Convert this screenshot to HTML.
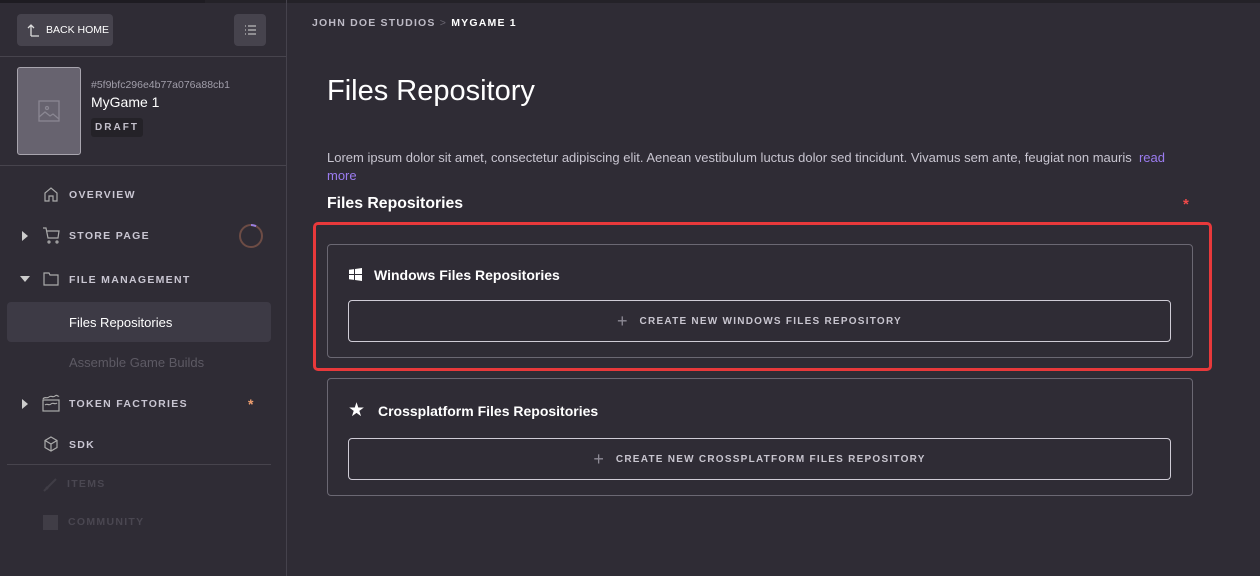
<!DOCTYPE html>
<html><head><style>
*{box-sizing:border-box;margin:0;padding:0}
body{width:1260px;height:576px;background:#2f2c35;font-family:"Liberation Sans",sans-serif;position:relative;overflow:hidden;color:#fff}
.abs{position:absolute}
.top{left:0;top:0;width:1260px;height:3px;background:#242228}
.top2{left:0;top:0;width:205px;height:3px;background:#1e1c22}
.vline{left:286px;top:0;width:1px;height:576px;background:#45424c}
.hl{height:1px;background:#47444d}
.nav{font-size:10.5px;font-weight:bold;letter-spacing:1.3px;color:#c9c6d2}
.card{border:1px solid #6b6873;border-radius:4px}
.btn{border:1px solid #cfccd6;border-radius:4px;font-size:10px;font-weight:bold;letter-spacing:1.25px;color:#c8c5cf;display:flex;align-items:center;justify-content:center}
.btn span.p{font-size:18px;font-weight:normal;color:#8d8a95;margin-right:12px;letter-spacing:0}
</style></head><body>
<div class="abs top"></div><div class="abs top2"></div>
<div class="abs vline"></div>

<div class="abs" style="left:17px;top:14px;width:96px;height:32px;background:#46434d;border-radius:4px;display:flex;align-items:center;padding-left:10px;font-size:10.5px;color:#fff">
<svg width="14" height="16" viewBox="0 0 14 16" style="margin-right:5px"><path d="M4 14V3M1 6l3-3 3 3M4 14h8" stroke="#ddd" stroke-width="1.3" fill="none"/></svg>BACK HOME</div>
<div class="abs" style="left:234px;top:14px;width:32px;height:32px;background:#46434d;border-radius:4px">
<svg width="32" height="32" viewBox="0 0 32 32"><g stroke="#bbb" stroke-width="1.3"><path d="M11 12h1M14 12h8M11 16h1M14 16h8M11 20h1M14 20h8"/></g></svg></div>
<div class="abs hl" style="left:0;top:56px;width:286px"></div>

<div class="abs" style="left:17px;top:67px;width:64px;height:88px;background:#67636f;border:1px solid #a8a5ae;border-radius:3px">
<svg class="abs" style="left:20px;top:32px" width="22" height="22" viewBox="0 0 22 22"><g stroke="#8a8792" stroke-width="1.3" fill="none"><rect x="1" y="1" width="20" height="20"/><circle cx="9" cy="8" r="1.5"/><path d="M1 17l6-5 5 4 3-2 6 5"/></g></svg></div>
<div class="abs" style="left:91px;top:79px;font-size:10.5px;color:#a19eaa">#5f9bfc296e4b77a076a88cb1</div>
<div class="abs" style="left:91px;top:94px;font-size:14px;color:#fff">MyGame 1</div>
<div class="abs" style="left:91px;top:118px;width:52px;height:19px;background:#242228;border-radius:3px;font-size:10px;font-weight:bold;letter-spacing:2px;color:#c4c1cc;text-align:center;line-height:19px">DRAFT</div>
<div class="abs hl" style="left:0;top:165px;width:286px"></div>

<svg class="abs" style="left:43px;top:186px" width="16" height="16" viewBox="0 0 16 16"><path d="M2 15V7l6-5 6 5v8h-4v-5H6v5z" stroke="#aaa" stroke-width="1.2" fill="none"/></svg>
<div class="abs nav" style="left:69px;top:189px">OVERVIEW</div>

<div class="abs" style="left:22px;top:231px;border-left:6px solid #ccc;border-top:5px solid transparent;border-bottom:5px solid transparent"></div>
<svg class="abs" style="left:42px;top:226px" width="18" height="18" viewBox="0 0 18 18"><g stroke="#aaa" stroke-width="1.2" fill="none"><path d="M1 2h3l2 10h10l1-7H5"/><circle cx="7" cy="16" r="1"/><circle cx="15" cy="16" r="1"/></g></svg>
<div class="abs nav" style="left:69px;top:230px">STORE PAGE</div>
<svg class="abs" style="left:238px;top:223px" width="26" height="26" viewBox="0 0 26 26"><circle cx="13" cy="13" r="11" stroke="#6d4c45" stroke-width="2" fill="none"/><path d="M13 2a11 11 0 0 1 5 1.3" stroke="#9a7fe0" stroke-width="2" fill="none"/></svg>

<div class="abs" style="left:20px;top:276px;border-top:6px solid #ccc;border-left:5px solid transparent;border-right:5px solid transparent"></div>
<svg class="abs" style="left:43px;top:271px" width="16" height="16" viewBox="0 0 16 16"><path d="M1 2h5l1 2h8v10H1z" stroke="#aaa" stroke-width="1.2" fill="none"/></svg>
<div class="abs nav" style="left:69px;top:274px">FILE MANAGEMENT</div>

<div class="abs" style="left:7px;top:302px;width:264px;height:40px;background:#3d3a45;border-radius:4px"></div>
<div class="abs" style="left:69px;top:315px;font-size:13px;color:#fff">Files Repositories</div>
<div class="abs" style="left:69px;top:355px;font-size:13px;color:#5d5a64">Assemble Game Builds</div>

<div class="abs" style="left:22px;top:399px;border-left:6px solid #ccc;border-top:5px solid transparent;border-bottom:5px solid transparent"></div>
<svg class="abs" style="left:42px;top:394px" width="18" height="18" viewBox="0 0 18 18"><g stroke="#aaa" stroke-width="1.2" fill="none"><rect x="1" y="6" width="16" height="11"/><path d="M1 5c2-3 4 0 6-2s4 1 6-1 3 1 4 0M3 11c2-2 4 1 6-1s4 1 6-1"/></g></svg>
<div class="abs nav" style="left:69px;top:398px">TOKEN FACTORIES</div>
<div class="abs" style="left:248px;top:396px;color:#f0a070;font-size:14px;font-weight:bold">*</div>

<svg class="abs" style="left:43px;top:436px" width="16" height="16" viewBox="0 0 16 16"><g stroke="#aaa" stroke-width="1.2" fill="none"><path d="M8 1l6 3.5v7L8 15l-6-3.5v-7z"/><path d="M2 4.5L8 8l6-3.5M8 8v7"/></g></svg>
<div class="abs nav" style="left:69px;top:439px">SDK</div>
<div class="abs hl" style="left:7px;top:464px;width:264px"></div>
<svg class="abs" style="left:43px;top:477px" width="15" height="15" viewBox="0 0 15 15"><path d="M1 14L13 2M3 10l2 2" stroke="#403d46" stroke-width="2"/></svg>
<div class="abs nav" style="left:67px;top:478px;color:#4a4751">ITEMS</div>
<div class="abs" style="left:43px;top:515px;width:15px;height:15px;background:#403d46"></div>
<div class="abs nav" style="left:68px;top:516px;color:#4a4751">COMMUNITY</div>

<div class="abs" style="left:312px;top:17px;font-size:10.5px;font-weight:bold;letter-spacing:1.2px;color:#bdbac5">JOHN DOE STUDIOS <span style="color:#6a6772;font-weight:normal">&gt;</span> <span style="color:#fff">MYGAME 1</span></div>
<div class="abs" style="left:327px;top:75px;font-size:29px;color:#fff">Files Repository</div>
<div class="abs" style="left:327px;top:149px;width:870px;font-size:13px;line-height:18px;color:#c8c5d0">Lorem ipsum dolor sit amet, consectetur adipiscing elit. Aenean vestibulum luctus dolor sed tincidunt. Vivamus sem ante, feugiat non mauris&nbsp; <span style="color:#9b7cf0">read more</span></div>
<div class="abs" style="left:327px;top:195px;font-size:15.8px;font-weight:bold;color:#fff">Files Repositories</div>
<div class="abs" style="left:1183px;top:196px;font-size:15px;font-weight:bold;color:#f04a4a">*</div>

<div class="abs" style="left:313px;top:222px;width:899px;height:149px;border:3px solid #e8393b;border-radius:5px"></div>
<div class="abs card" style="left:327px;top:244px;width:866px;height:114px"></div>
<svg class="abs" style="left:349px;top:268px" width="13" height="13" viewBox="0 0 13 13"><path d="M0 1.8l5-.7v4.9H0zM6 1l7-1v6H6zM0 7h5v4.9l-5-.7zM6 7h7v6l-7-1z" fill="#fff"/></svg>
<div class="abs" style="left:374px;top:267px;font-size:14px;font-weight:bold;color:#fff">Windows Files Repositories</div>
<div class="abs btn" style="left:348px;top:300px;width:823px;height:42px"><span class="p">+</span>CREATE NEW WINDOWS FILES REPOSITORY</div>

<div class="abs card" style="left:327px;top:378px;width:866px;height:118px"></div>
<div class="abs" style="left:348px;top:399px;font-size:19px;color:#fff">★</div>
<div class="abs" style="left:378px;top:403px;font-size:14px;font-weight:bold;color:#fff">Crossplatform Files Repositories</div>
<div class="abs btn" style="left:348px;top:438px;width:823px;height:42px"><span class="p">+</span>CREATE NEW CROSSPLATFORM FILES REPOSITORY</div>
</body></html>
